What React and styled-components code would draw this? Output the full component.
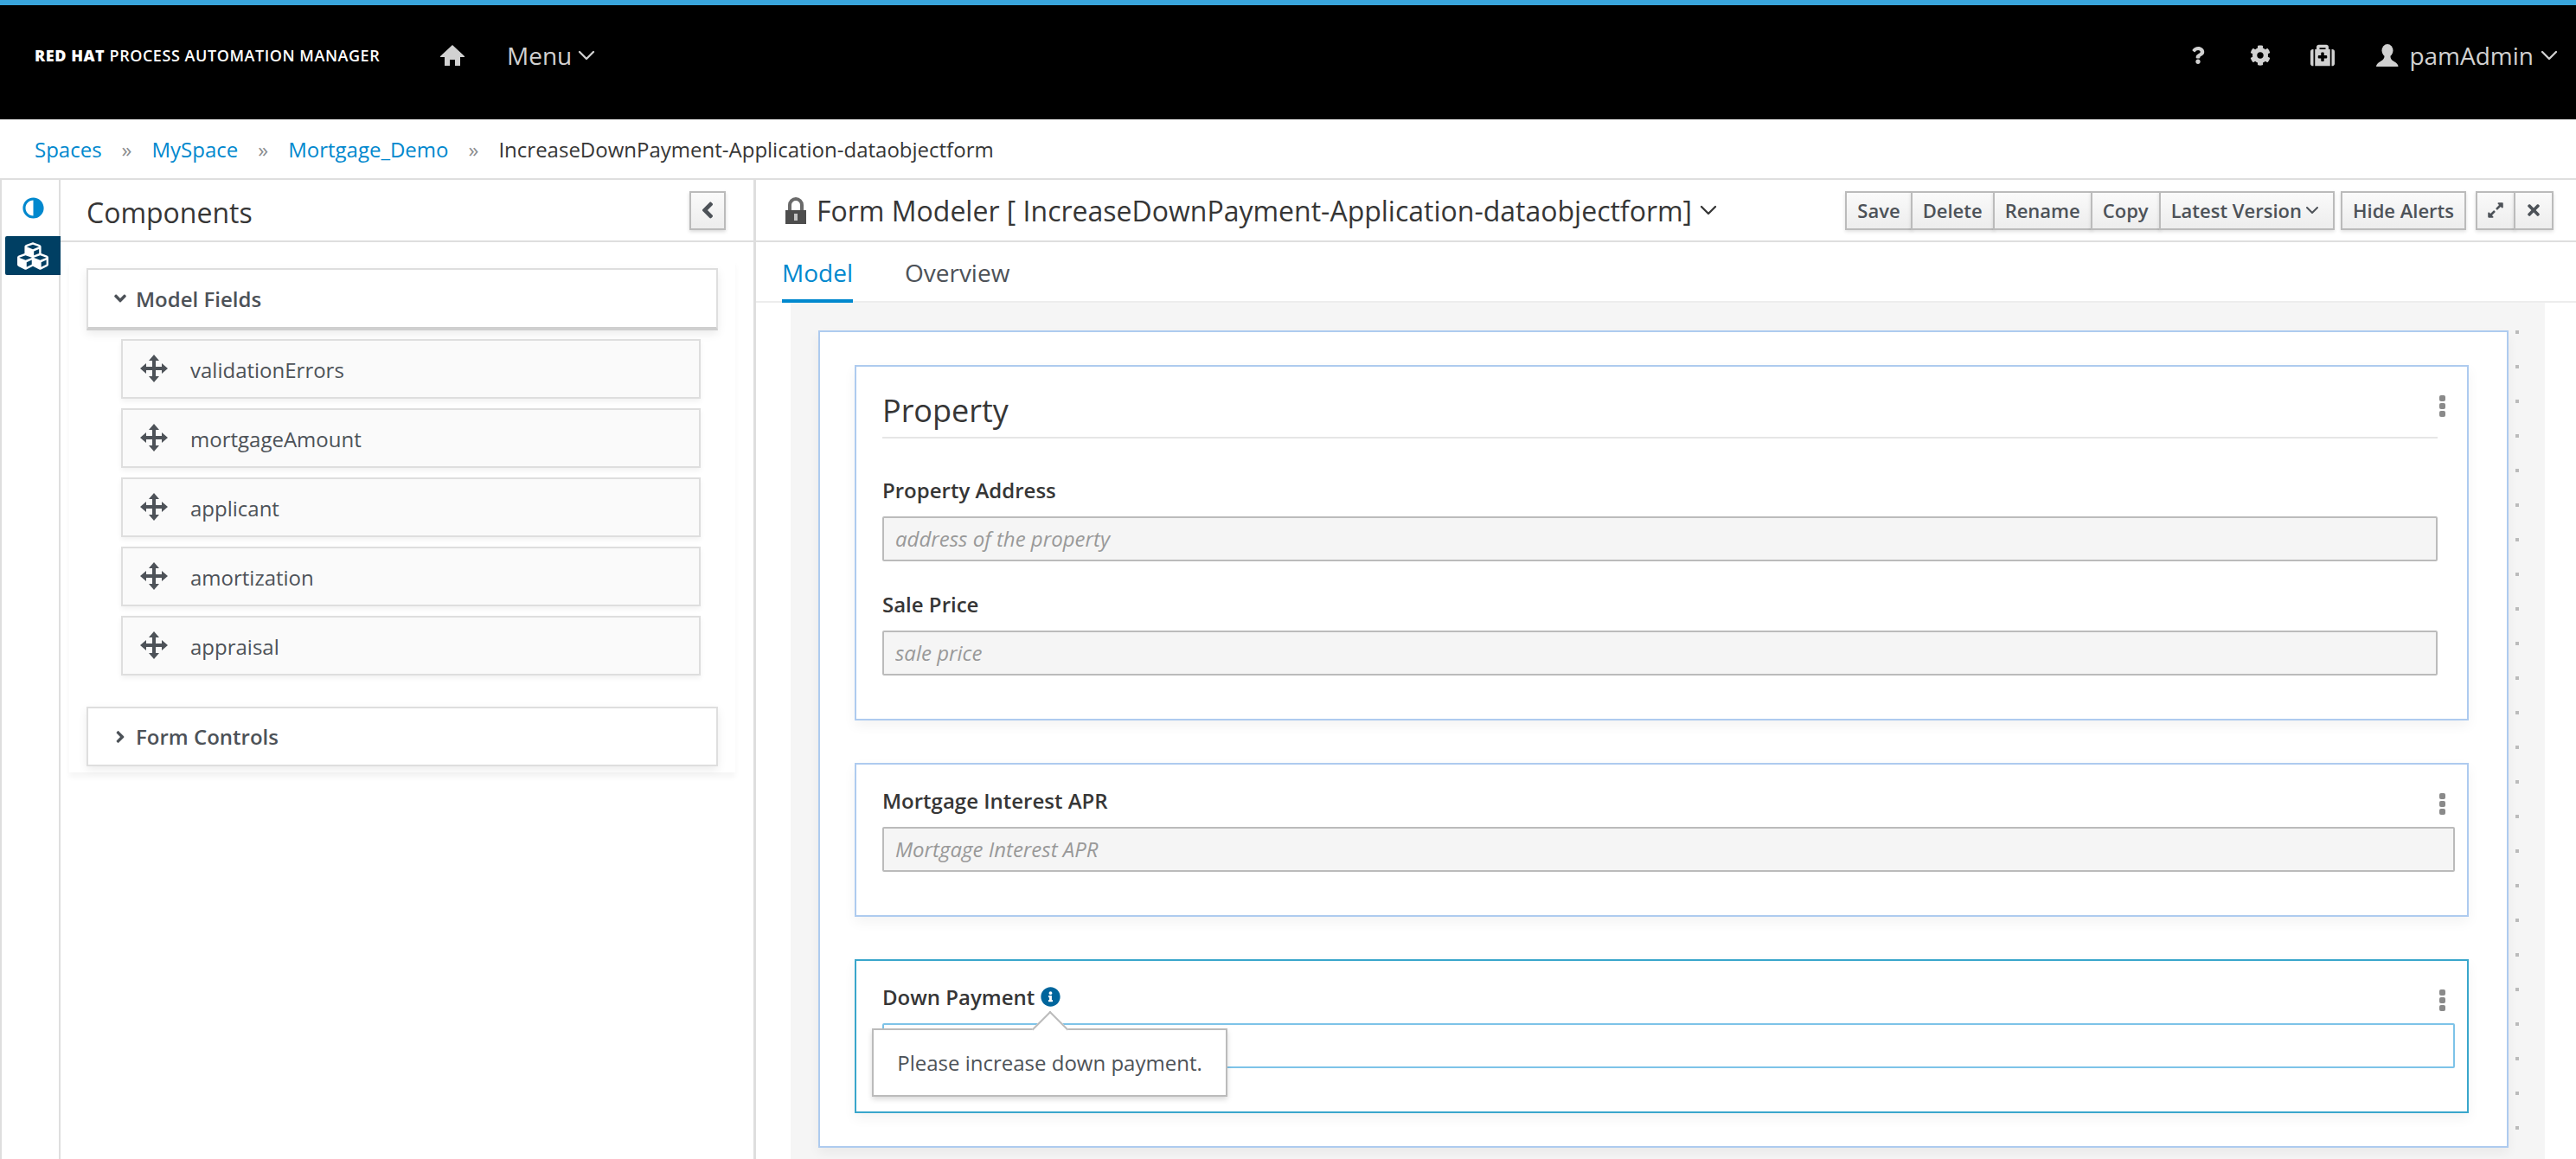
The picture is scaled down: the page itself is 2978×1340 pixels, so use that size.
// libraries
import React from 'react';
import styled, { createGlobalStyle } from 'styled-components';
import { ChevronDown } from 'lucide-react';
import {
    FaAdjust,
    FaAngleDown,
    FaAngleLeft,
    FaAngleRight,
    FaCog,
    FaCubes,
    FaExpandAlt,
    FaInfoCircle,
    FaMedkit,
    FaQuestion,
    FaTimes,
} from 'react-icons/fa';

const FIELDS = ['validationErrors', 'mortgageAmount', 'applicant', 'amortization', 'appraisal'];
const CRUMBS = ['Spaces', 'MySpace', 'Mortgage_Demo'];

const MoveIcon = () => (
    <svg width="32" height="32" viewBox="0 0 32 32" fill="currentColor">
        <rect x="14" y="4" width="4" height="24" />
        <rect x="4" y="14" width="24" height="4" />
        <path d="M16 0l6 7H10zM16 32l-6-7h12zM0 16l7-6v12zM32 16l-7 6V10z" />
    </svg>
);

const HomeIcon = () => (
    <svg width="28" height="24" viewBox="0 0 28 24" fill="currentColor">
        <path d="M14 0l14 13v1h-5v10h-6v-7h-6v7H5V14H0v-1z" />
    </svg>
);

const UserIcon = () => (
    <svg width="26" height="26" viewBox="0 0 26 26" fill="currentColor">
        <ellipse cx="13" cy="7.5" rx="6.5" ry="7.5" />
        <path d="M9.5 13.5h7c0 3.5 1 4.5 4 6.5 3 1.700 5 3.500 5 6H0c0-2.500 2-4.300 5-6 3-2 4.500-3 4.500-6.500z" />
    </svg>
);

const PadlockIcon = () => (
    <svg width="24" height="32" viewBox="0 0 24 32">
        <path d="M5 17V10a7 7 0 0 1 14 0v7" fill="none" stroke="#6a6a6a" strokeWidth="4" />
        <rect y="16" width="24" height="16" fill="#4d4d4d" />
        <rect x="10" y="20" width="4" height="8" fill="#c4c4c4" />
    </svg>
);

const DotsIcon = () => (
    <svg width="7" height="25" viewBox="0 0 7 25" fill="currentColor">
        <rect width="7" height="7" rx="2" />
        <rect y="9" width="7" height="7" rx="2" />
        <rect y="18" width="7" height="7" rx="2" />
    </svg>
);

const App = () => {
    return (
        <Page>
            <GlobalStyle />
            <TopBar>
                <Brand>
                    <b>RED HAT</b> PROCESS AUTOMATION MANAGER
                </Brand>
                <HomeLink>
                    <HomeIcon />
                </HomeLink>
                <MenuLink>
                    Menu
                    <ChevronDown size={32} strokeWidth={1.75} />
                </MenuLink>
                <TopActions>
                    <TopIcon>
                        <FaQuestion size={20} />
                    </TopIcon>
                    <TopIcon>
                        <FaCog size={24} />
                    </TopIcon>
                    <TopIcon>
                        <FaMedkit size={28} />
                    </TopIcon>
                    <UserMenu>
                        <UserIcon />
                        <UserName>pamAdmin</UserName>
                        <ChevronDown size={32} strokeWidth={1.75} />
                    </UserMenu>
                </TopActions>
            </TopBar>

            <Breadcrumb>
                {CRUMBS.map((crumb) => (
                    <React.Fragment key={crumb}>
                        <CrumbLink>{crumb}</CrumbLink>
                        <CrumbSep>»</CrumbSep>
                    </React.Fragment>
                ))}
                <span>IncreaseDownPayment-Application-dataobjectform</span>
            </Breadcrumb>

            <Main>
                <Rail>
                    <RailItem>
                        <FlippedIcon>
                            <FaAdjust size={25} />
                        </FlippedIcon>
                    </RailItem>
                    <RailItem $active>
                        <FaCubes size={36} />
                    </RailItem>
                </Rail>

                <SidePanel>
                    <PanelHeader>
                        <PanelTitle>Components</PanelTitle>
                        <CollapseButton>
                            <FaAngleLeft size={30} />
                        </CollapseButton>
                    </PanelHeader>
                    <Shelf>
                        <ShelfHeader $open>
                            <FaAngleDown size={22} />
                            Model Fields
                        </ShelfHeader>
                        <FieldList>
                            {FIELDS.map((field) => (
                                <FieldItem key={field}>
                                    <MoveIcon />
                                    <span>{field}</span>
                                </FieldItem>
                            ))}
                        </FieldList>
                        <ShelfHeader>
                            <FaAngleRight size={22} />
                            Form Controls
                        </ShelfHeader>
                    </Shelf>
                </SidePanel>

                <Editor>
                    <EditorHeader>
                        <PadlockIcon />
                        <EditorTitle>
                            Form Modeler [ IncreaseDownPayment-Application-dataobjectform]
                        </EditorTitle>
                        <ChevronDown size={32} strokeWidth={1.75} color="#363636" />
                        <Toolbar>
                            <ButtonGroup>
                                <ToolButton>Save</ToolButton>
                                <ToolButton>Delete</ToolButton>
                                <ToolButton>Rename</ToolButton>
                                <ToolButton>Copy</ToolButton>
                                <ToolButton>
                                    Latest Version
                                    <ChevronDown size={24} strokeWidth={2} />
                                </ToolButton>
                            </ButtonGroup>
                            <ButtonGroup>
                                <ToolButton>Hide Alerts</ToolButton>
                            </ButtonGroup>
                            <WindowGroup>
                                <ToolButton $icon>
                                    <FaExpandAlt size={20} />
                                </ToolButton>
                                <ToolButton $icon>
                                    <FaTimes size={20} />
                                </ToolButton>
                            </WindowGroup>
                        </Toolbar>
                    </EditorHeader>

                    <Tabs>
                        <Tab $active>Model</Tab>
                        <Tab>Overview</Tab>
                    </Tabs>

                    <Canvas>
                        <FormFrame>
                            <FormBox>
                                <MoreMenu>
                                    <DotsIcon />
                                </MoreMenu>
                                <SectionTitle>Property</SectionTitle>
                                <PropertyFields>
                                    <Field>
                                        <FieldLabel>Property Address</FieldLabel>
                                        <Input disabled placeholder="address of the property" />
                                    </Field>
                                    <Field>
                                        <FieldLabel>Sale Price</FieldLabel>
                                        <Input disabled placeholder="sale price" />
                                    </Field>
                                </PropertyFields>
                            </FormBox>

                            <FormBox $compact>
                                <MoreMenu>
                                    <DotsIcon />
                                </MoreMenu>
                                <Field>
                                    <FieldLabel>Mortgage Interest APR</FieldLabel>
                                    <Input disabled placeholder="Mortgage Interest APR" />
                                </Field>
                            </FormBox>

                            <FormBox $compact $selected>
                                <MoreMenu>
                                    <DotsIcon />
                                </MoreMenu>
                                <Field>
                                    <FieldLabel>
                                        Down Payment
                                        <InfoIcon>
                                            <FaInfoCircle size={23} />
                                        </InfoIcon>
                                    </FieldLabel>
                                    <Input $focused />
                                </Field>
                                <Tooltip>Please increase down payment.</Tooltip>
                            </FormBox>
                        </FormFrame>
                        <Gutter />
                    </Canvas>
                </Editor>
            </Main>
        </Page>
    );
};

export default App;

const GlobalStyle = createGlobalStyle`
    html,
    body {
        margin: 0;
        padding: 0;
        background: #fff;
    }

    * {
        box-sizing: border-box;
    }
`;

const Page = styled.div`
    display: flex;
    flex-direction: column;
    width: 2978px;
    height: 1340px;
    overflow: hidden;
    font-family: 'Open Sans', 'Liberation Sans', sans-serif;
    font-size: 24px;
    color: #363636;
`;

const TopBar = styled.header`
    display: flex;
    flex: none;
    align-items: center;
    height: 138px;
    padding: 0 15px 16px 40px;
    border-top: 6px solid #39a5dc;
    background: #000;
    color: #d1d1d1;
`;

const Brand = styled.div`
    width: 469px;
    font-size: 18px;
    font-weight: 600;
    letter-spacing: 0.55px;
    white-space: nowrap;
    color: #fff;

    b {
        font-weight: 800;
    }
`;

const HomeLink = styled.div`
    display: flex;
    width: 77px;
`;

const MenuLink = styled.div`
    display: flex;
    align-items: center;
    gap: 1px;
    font-size: 28px;
`;

const TopActions = styled.div`
    display: flex;
    align-items: center;
    margin-left: auto;
`;

const TopIcon = styled.div`
    display: flex;
    justify-content: center;
    width: 72px;
`;

const UserMenu = styled.div`
    display: flex;
    align-items: center;
    gap: 2px;
    margin-left: 26px;
    font-size: 28px;
`;

const UserName = styled.span`
    margin-left: 10px;
`;

const Breadcrumb = styled.nav`
    display: flex;
    flex: none;
    align-items: center;
    height: 70px;
    padding-left: 40px;
    border-bottom: 2px solid #dedede;
    color: #363636;
`;

const CrumbLink = styled.a`
    color: #0088ce;
`;

const CrumbSep = styled.span`
    margin: 0 23px;
    color: #8b8d8f;
`;

const Main = styled.div`
    display: flex;
    flex: 1;
    min-height: 0;
`;

const Rail = styled.aside`
    flex: none;
    width: 70px;
    padding-left: 4px;
    border-right: 2px solid #dedede;
    border-left: 2px solid #dedede;
`;

const RailItem = styled.div`
    display: flex;
    align-items: center;
    justify-content: center;
    height: ${(props) => (props.$active ? '45px' : '65px')};
    margin-right: -2px;
    border-radius: 2px 0 0 2px;
    background: ${(props) => (props.$active ? '#003f63' : 'transparent')};
    color: ${(props) => (props.$active ? '#fff' : '#0088ce')};
`;

const FlippedIcon = styled.span`
    display: flex;
    transform: scaleX(-1);
`;

const SidePanel = styled.section`
    flex: none;
    width: 804px;
    border-right: 3px solid #dedede;
`;

const PanelHeader = styled.div`
    display: flex;
    align-items: center;
    justify-content: space-between;
    height: 72px;
    padding: 0 32px 0 30px;
    border-bottom: 2px solid #dedede;
`;

const PanelTitle = styled.h2`
    margin: 4px 0 0;
    font-size: 32px;
    font-weight: 400;
`;

const CollapseButton = styled.button`
    display: flex;
    align-items: center;
    justify-content: center;
    width: 42px;
    height: 45px;
    padding: 0;
    border: 2px solid #bbb;
    background: linear-gradient(#fafafa, #ededed);
    box-shadow: 0 2px 4px rgba(0, 0, 0, 0.15);
    color: #4d5258;
`;

const Shelf = styled.div`
    width: 770px;
    margin: 20px 0 0 10px;
    padding: 10px 20px 7px;
    box-shadow: 0 6px 6px rgba(0, 0, 0, 0.04);
`;

const ShelfHeader = styled.div`
    display: flex;
    align-items: center;
    gap: 7px;
    height: ${(props) => (props.$open ? '72px' : '69px')};
    padding-left: 26px;
    border: 2px solid #dedede;
    border-bottom: ${(props) => (props.$open ? '4px solid #cfcfcf' : '2px solid #dedede')};
    box-shadow: 0 4px 10px rgba(0, 0, 0, 0.08);
    font-weight: 600;
    color: #4d5258;
`;

const FieldList = styled.div`
    display: flex;
    flex-direction: column;
    gap: 11px;
    padding: 10px 20px 36px 40px;
`;

const FieldItem = styled.div`
    display: flex;
    align-items: center;
    gap: 26px;
    height: 69px;
    padding-left: 20px;
    border: 2px solid #dedede;
    background: #fafafa;
    box-shadow: 0 3px 6px rgba(0, 0, 0, 0.06);
    color: #4d5258;

    span {
        padding-top: 2px;
    }

    svg {
        margin-top: -2px;
    }
`;

const Editor = styled.section`
    display: flex;
    flex: 1;
    flex-direction: column;
    min-width: 0;
`;

const EditorHeader = styled.div`
    display: flex;
    flex: none;
    align-items: center;
    height: 72px;
    padding: 0 26px 0 34px;
    border-bottom: 2px solid #dedede;
`;

const EditorTitle = styled.h1`
    margin: 0 3px 0 12px;
    font-size: 32px;
    font-weight: 400;
    white-space: nowrap;
`;

const Toolbar = styled.div`
    display: flex;
    gap: 9px;
    margin-left: auto;
`;

const ButtonGroup = styled.div`
    display: flex;
`;

const WindowGroup = styled(ButtonGroup)`
    margin-left: 4px;
`;

const ToolButton = styled.button`
    display: flex;
    align-items: center;
    justify-content: center;
    width: ${(props) => (props.$icon ? '46px' : 'auto')};
    height: 45px;
    margin-left: -2px;
    padding: ${(props) => (props.$icon ? '0' : '0 12px')};
    border: 2px solid #bbb;
    background: linear-gradient(#fafafa, #ededed);
    box-shadow: 0 2px 4px rgba(0, 0, 0, 0.12);
    font-family: inherit;
    font-size: 22px;
    font-weight: 600;
    color: #4d5258;
`;

const Tabs = styled.div`
    display: flex;
    flex: none;
    gap: 60px;
    height: 70px;
    padding-left: 30px;
    border-bottom: 2px solid #ededed;
`;

const Tab = styled.div`
    display: flex;
    align-items: center;
    height: 70px;
    padding-top: 4px;
    border-bottom: 4px solid ${(props) => (props.$active ? '#0088ce' : 'transparent')};
    font-size: 28px;
    color: ${(props) => (props.$active ? '#0088ce' : '#4d5258')};
`;

const Canvas = styled.div`
    display: flex;
    flex: 1;
    min-height: 0;
    margin: 0 36px 0 40px;
    padding: 32px 0 0 32px;
    background: #f5f5f5;
`;

const FormFrame = styled.div`
    display: flex;
    flex: none;
    flex-direction: column;
    gap: 49px;
    width: 1954px;
    height: 945px;
    padding: 38px 44px 38px 40px;
    border: 2px solid #aecbef;
    background: #fff;
    box-shadow: 0 6px 12px rgba(0, 0, 0, 0.05);
`;

const FormBox = styled.div`
    position: relative;
    flex: none;
    padding: ${(props) => (props.$compact ? '24px 14px 50px 30px' : '0 34px 50px 30px')};
    border: 2px solid ${(props) => (props.$selected ? '#39a6cb' : '#aecbef')};
    background: #fff;
    box-shadow: 0 6px 14px rgba(0, 0, 0, 0.05);
`;

const MoreMenu = styled.div`
    position: absolute;
    top: 33px;
    right: 25px;
    display: flex;
    color: #8a8a8a;
`;

const SectionTitle = styled.h3`
    display: flex;
    align-items: flex-end;
    height: 83px;
    margin: 0;
    padding-bottom: 6px;
    border-bottom: 2px solid #e6e6e6;
    font-size: 36px;
    font-weight: 400;
`;

const PropertyFields = styled.div`
    display: flex;
    flex-direction: column;
    gap: 32px;
    padding-top: 42px;
`;

const Field = styled.div`
    display: flex;
    flex-direction: column;
    gap: 14px;
`;

const FieldLabel = styled.label`
    display: flex;
    align-items: center;
    gap: 7px;
    height: 34px;
    font-weight: 600;
`;

const InfoIcon = styled.span`
    display: flex;
    color: #00659c;
`;

const Input = styled.input`
    width: 100%;
    height: 52px;
    padding: 0 13px 2px;
    border: 2px solid ${(props) => (props.$focused ? '#7dc3e8' : '#bbb')};
    border-radius: 2px;
    background: ${(props) => (props.$focused ? '#fff' : '#f5f5f5')};
    font-family: inherit;
    font-size: 24px;

    &::placeholder {
        font-style: italic;
        color: #999;
        opacity: 1;
    }
`;

const Tooltip = styled.div`
    position: absolute;
    top: 78px;
    left: 18px;
    display: flex;
    align-items: center;
    justify-content: center;
    width: 411px;
    height: 79px;
    border: 2px solid #bbb;
    background: #fff;
    box-shadow: 0 3px 6px rgba(0, 0, 0, 0.15);
    color: #4d5258;

    &::before {
        content: '';
        position: absolute;
        top: -16px;
        left: 50%;
        width: 28px;
        height: 28px;
        border-top: 2px solid #bbb;
        border-left: 2px solid #bbb;
        background: #fff;
        transform: translateX(-50%) rotate(45deg);
    }
`;

const Gutter = styled.div`
    flex: 1;
    background-image: linear-gradient(#bbb 4px, transparent 4px);
    background-repeat: repeat-y;
    background-position: 8px 0;
    background-size: 4px 40px;
`;
